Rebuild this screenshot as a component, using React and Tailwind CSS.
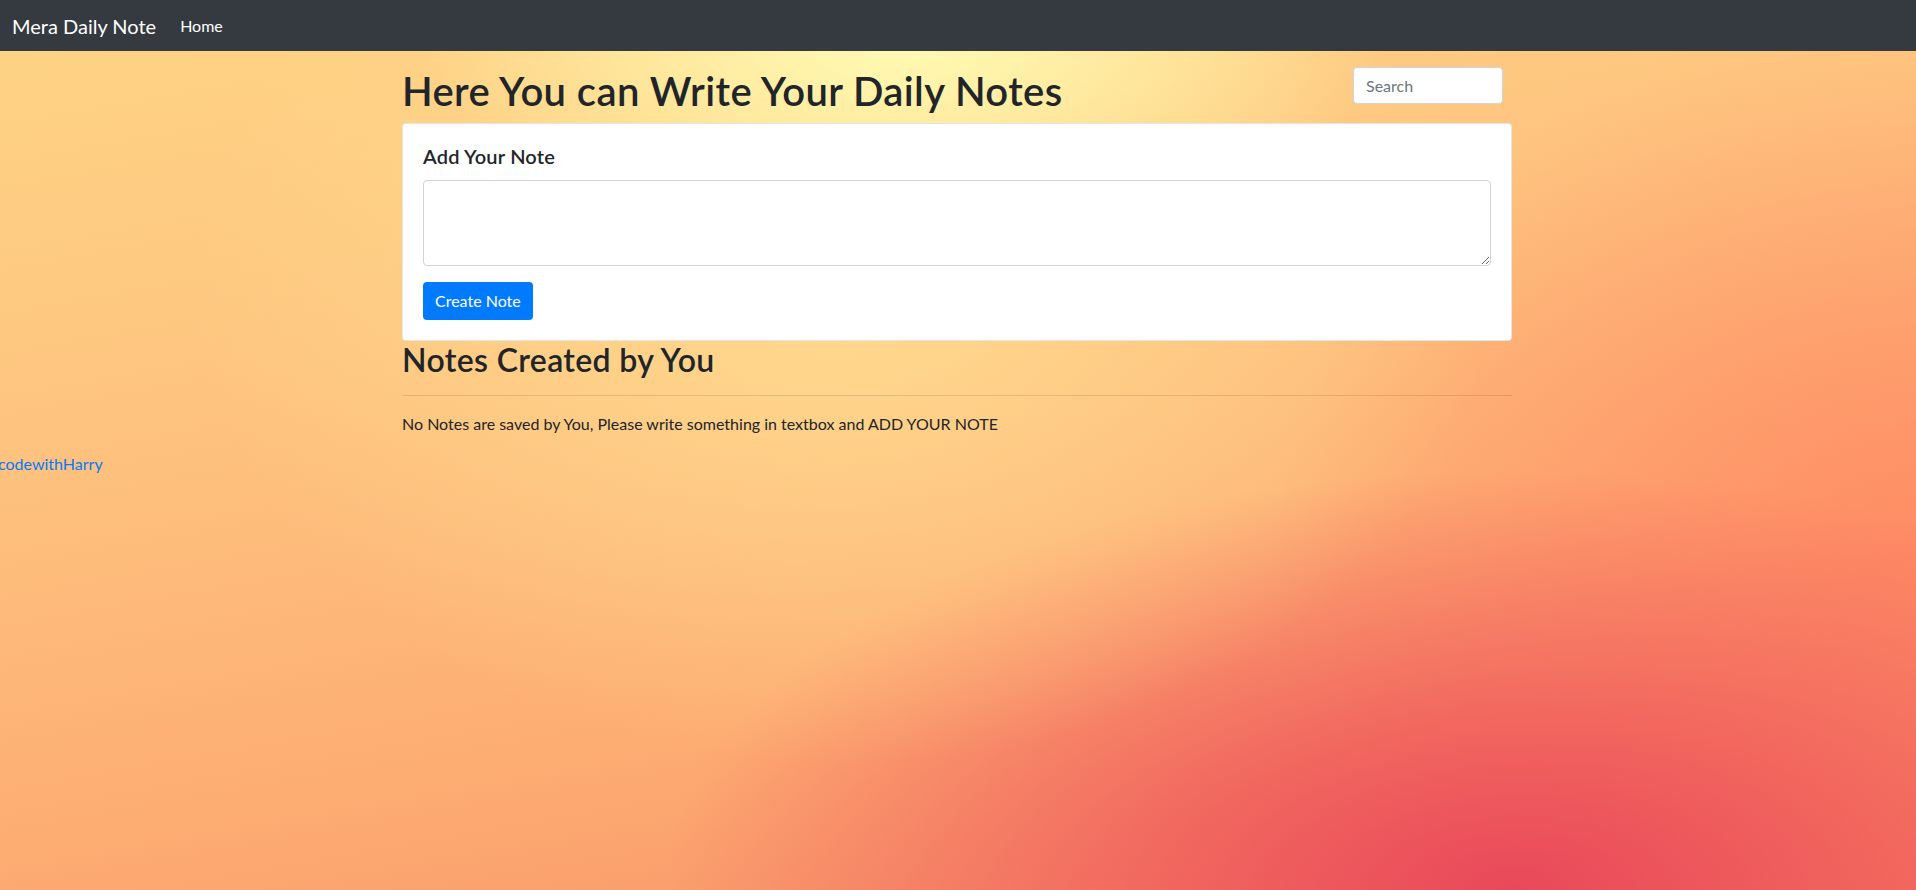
import React from 'react';

const App = () => {
  return (
    <div className="min-h-screen text-[#212529] font-['Lato','Liberation_Sans',sans-serif] bg-[radial-gradient(ellipse_480px_190px_at_47%_5%,#fffbb4_0%,rgba(255,250,175,0.55)_50%,rgba(255,250,175,0)_100%),radial-gradient(ellipse_650px_480px_at_44%_32%,rgba(255,222,146,0.85)_0%,rgba(255,222,146,0)_100%),radial-gradient(ellipse_850px_420px_at_79%_100%,#e9485a_0%,rgba(238,85,90,0.75)_40%,rgba(245,110,95,0)_100%),radial-gradient(ellipse_650px_520px_at_100%_62%,rgba(255,130,96,0.75)_0%,rgba(255,130,96,0)_100%),linear-gradient(170deg,#fed586_0%,#fec47f_35%,#fdac72_70%,#f68c66_100%)]">
      <nav className="h-[51px] bg-[#343a40] flex items-center px-3">
        <span className="text-xl text-white mr-4">Mera Daily Note</span>
        <a href="#" className="px-2 text-base text-white">Home</a>
      </nav>

      <div className="w-[1110px] mx-auto mt-4 -translate-x-px">
        <div className="flex justify-between items-start">
          <h1 className="text-[40px] leading-[48px] font-semibold tracking-[0.4px] mb-2">Here You can Write Your Daily Notes</h1>
          <input
            type="search"
            placeholder="Search"
            className="w-[150px] h-[37px] mr-[9px] px-3 text-base bg-white border border-[#ced4da] rounded placeholder:text-[#6c757d] outline-none"
          />
        </div>

        <div className="bg-white border border-black/10 rounded p-5">
          <h5 className="text-xl leading-6 font-semibold tracking-[0.2px] mb-3">Add Your Note</h5>
          <textarea
            rows="3"
            className="block w-full h-[86px] mb-4 px-3 py-1.5 border border-[#ced4da] rounded outline-none"
          ></textarea>
          <button className="h-[38px] px-3 bg-[#007bff] text-white text-base rounded">Create Note</button>
        </div>

        <h2 className="text-[32px] leading-[38px] font-semibold tracking-[0.35px]">Notes Created by You</h2>
        <hr className="my-4 border-t border-black/10" />
        <p className="text-base leading-6 mb-4">No Notes are saved by You, Please write something in textbox and ADD YOUR NOTE</p>
      </div>

      <a href="#" className="block -ml-[2px] text-base leading-6 text-[#007bff]">codewithHarry</a>
    </div>
  );
};

export default App;
